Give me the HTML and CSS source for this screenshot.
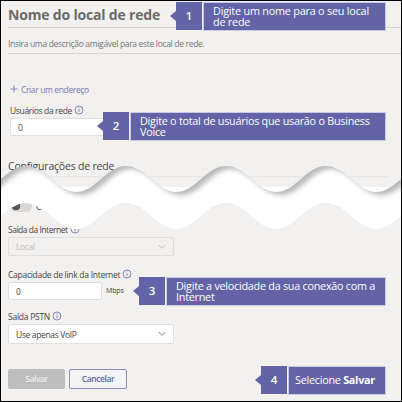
FILE: index.html
```html
<!DOCTYPE html>
<html lang="pt-BR">
<head>
<meta charset="utf-8">
<title>Local de rede</title>
<link rel="stylesheet" href="styles.css">
</head>
<body>
<svg class="defs" width="0" height="0"><defs>
<symbol id="info" viewBox="0 0 10 10"><circle cx="5" cy="5" r="4" fill="none" stroke="#7779b5" stroke-width=".9"/><path d="M5 4.3V7.2M5 2.5V3.4" stroke="#7779b5" stroke-width=".9"/></symbol>
<symbol id="chevron" viewBox="0 0 8 6"><path d="M.7 1L4 4.4L7.3 1" fill="none" stroke="currentColor" stroke-width=".9"/></symbol>
</defs></svg>
<main class="page">
  <h1 class="title"><span>Nome do local de rede</span></h1>
  <p class="description"><span>Insira uma descrição amigável para este local de rede.</span></p>
  <div class="address"><svg width="8" height="8" viewBox="0 0 8 8"><path d="M4 .5V7.5M.5 4H7.5" stroke="#7779b5" stroke-width=".9"/></svg><span>Criar um endereço</span></div>
  <label class="label users"><span>Usuários da rede</span><svg class="info"><use href="#info"/></svg></label>
  <div class="field users-field">0</div>
  <h2 class="section"><span>Configurações de rede</span></h2>
  <div class="toggle-row"><span class="toggle"></span><span>C</span></div>
  <label class="label outlet"><span>Saída da Internet</span><svg class="info"><use href="#info"/></svg></label>
  <div class="field select disabled"><span>Local</span><svg class="chevron"><use href="#chevron"/></svg></div>
  <label class="label capacity"><span>Capacidade de link da Internet</span><svg class="info"><use href="#info"/></svg></label>
  <div class="capacity-row"><div class="field capacity-field">0</div><span class="unit">Mbps</span></div>
  <label class="label pstn"><span>Saída PSTN</span><svg class="info"><use href="#info"/></svg></label>
  <div class="field select voip"><span>Use apenas VoIP</span><svg class="chevron"><use href="#chevron"/></svg></div>
  <div class="actions"><button class="save">Salvar</button><button class="cancel">Cancelar</button></div>

  <svg class="tear" width="400" height="70" viewBox="1 162 400 70">
    <defs>
      <filter id="soft" x="-5%" y="-30%" width="110%" height="160%"><feGaussianBlur stdDeviation="2.4"/></filter>
      <path id="band" d="M-24 192C-4 192 6 166 26 166S56 192 76 192S106 166 126 166S156 192 176 192S206 166 226 166S256 192 276 192S306 166 326 166S356 192 376 192S406 166 426 166V203C406 203 396 229 376 229S346 203 326 203S296 229 276 229S246 203 226 203S196 229 176 229S146 203 126 203S96 229 76 229S46 203 26 203S-4 229 -24 229Z"/>
      <clipPath id="bandClip"><use href="#band"/></clipPath>
    </defs>
    <path d="M60 187H92V200H60ZM160 187H192V200H160ZM260 187H292V200H260ZM360 187H388V200H360Z" fill="#fff"/>
    <use href="#band" fill="#b8b8b8"/>
    <g clip-path="url(#bandClip)">
      <path transform="translate(5 3)" filter="url(#soft)" fill="#fff" d="M-124 192C-104 192 -94 166 -74 166S-44 192 -24 192C-4 192 6 166 26 166S56 192 76 192S106 166 126 166S156 192 176 192S206 166 226 166S256 192 276 192S306 166 326 166S356 192 376 192S406 166 426 166V250H-124Z"/>
      <path d="M-10 202H410V230H-10Z" fill="#fff"/>
    </g>
  </svg>

  <div class="callout one"><b class="number">1</b><div class="message"><span>Digite um nome para o seu local<br>de rede</span></div></div>
  <div class="callout two"><b class="number">2</b><div class="message"><span>Digite o total de usuários que usarão o Business<br>Voice</span></div></div>
  <div class="callout three"><b class="number">3</b><div class="message"><span>Digite a velocidade da sua conexão com a<br>Internet</span></div></div>
  <div class="callout four"><b class="number">4</b><div class="message"><span>Selecione <b>Salvar</b></span></div></div>
</main>
</body>
</html>
```
FILE: styles.css
```css
* { box-sizing: border-box; }
body { margin: 0; font-family: "Open Sans", "Noto Sans", sans-serif; }
.defs { position: absolute; }
.page {
  position: relative;
  width: 402px;
  height: 402px;
  border: 1px solid #000;
  background: #f2f1f0;
  overflow: hidden;
  color: #484644;
  font-size: 8.5px;
  white-space: nowrap;
  display: flex;
  flex-direction: column;
  padding-left: 7px;
}
h1, h2, p { margin: 0; }
.page > * { flex-shrink: 0; }
.title { height: 27px; border-bottom: 1px solid #d5d4d3; color: #6c6b6a; font-size: 14px; line-height: 27px; letter-spacing: -.18px; }
.description { height: 26px; padding-top: 9px; border-bottom: 1px solid #d5d4d3; color: #777574; line-height: 14px; letter-spacing: -.32px; }
.address { display: flex; align-items: center; gap: 3px; height: 12px; margin: 29px 0 0 2px; color: #7779b5; letter-spacing: -.37px; }
.label { display: flex; align-items: center; gap: 2px; height: 12px; letter-spacing: -.35px; }
.info { width: 10px; height: 10px; }
.users { margin: 9px 0 0 2px; }
.field { height: 18px; border: 1px solid #e1dfdd; border-radius: 2px; background: #fff; padding: 0 7px; line-height: 17px; letter-spacing: -.35px; }
.users-field { width: 110px; margin: 2px 0 0 2px; }
.section { width: 380px; height: 20px; margin-top: 21px; border-bottom: 1px solid #e7e6e5; font-size: 10.5px; font-weight: 400; line-height: 19px; letter-spacing: -.2px; }
.toggle-row { display: flex; gap: 4px; height: 13px; margin: 23px 0 0 2px; line-height: 13px; }
.toggle { width: 22px; height: 12px; border-radius: 6px; background: radial-gradient(circle at 6px 6px, #555 4px, #d8d7d6 4.6px); }
.outlet { margin-top: 10px; letter-spacing: -.48px; }
.select { display: flex; align-items: center; justify-content: space-between; width: 166px; }
.disabled { height: 19px; margin-top: 2px; background: #f2f1f0; color: #bebcba; }
.chevron { width: 8px; height: 6px; color: #777; }
.disabled .chevron { color: #bbb; }
.capacity { margin-top: 12px; letter-spacing: -.28px; }
.capacity-row { display: flex; align-items: center; gap: 4px; height: 18px; margin-top: 2px; }
.capacity-field { width: 94px; }
.unit { font-size: 7px; line-height: 18px; letter-spacing: -.15px; }
.pstn { margin-top: 10px; letter-spacing: -.25px; }
.voip { height: 20px; margin-top: 2px; }
.actions { display: flex; gap: 4px; margin-top: 25px; }
.actions button { height: 20px; padding: 0; border: 1px solid #bdbdbd; border-radius: 2px; font: 600 8.5px/18px "Open Sans", sans-serif; letter-spacing: -.4px; }
.actions .save { width: 57px; background: #bdbdbd; color: #efefef; }
.actions .cancel { width: 58px; border-color: #8d8ec2; background: #f5f4f5; color: #6264a7; }
.tear { position: absolute; left: 0; top: 161px; }
.callout { position: absolute; right: 15px; display: flex; gap: 1px; height: 29px; color: #fff; font-size: 10.8px; line-height: 11px; letter-spacing: -.25px; }
.number { position: relative; flex: none; width: 26px; height: 28px; margin-top: 1px; background: #6264a7; font-size: 11.5px; font-weight: 600; line-height: 28px; text-align: center; }
.number::before { content: ""; position: absolute; left: -6px; top: 9px; border: 5px solid transparent; border-left: 0; border-right: 6px solid #6264a7; }
.message { flex: 1; min-width: 0; margin-top: 1px; border: 1px solid #c9c9e4; background: #6264a7; padding: 2px 0 0 9px; }
.one { left: 175px; top: 0; height: 30px; letter-spacing: -.2px; }
.two { left: 102px; top: 110px; height: 30px; }
.three { left: 138px; top: 275px; height: 30px; }
.four { left: 260px; top: 364px; height: 30px; }
.four .message { padding: 7px 0 0 6px; }
```
